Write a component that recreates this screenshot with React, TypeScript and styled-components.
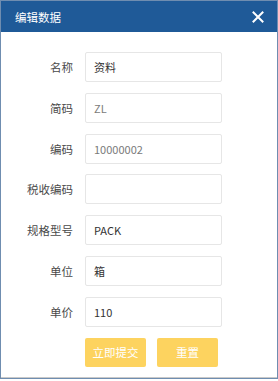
import React from 'react';
import styled, { createGlobalStyle } from 'styled-components';

const GlobalStyle = createGlobalStyle`
  html, body {
    margin: 0;
    padding: 0;
    background: #ffffff;
  }
  body {
    font-family: "Noto Sans CJK SC", "Noto Sans", sans-serif;
  }
`;

const Dialog = styled.div`
  width: 278px;
  height: 379px;
  box-sizing: border-box;
  border: 1px solid #6f8db0;
  box-shadow: inset 0 -1px 0 #c9c9c9;
  background: #ffffff;
  display: flex;
  flex-direction: column;
`;

const Header = styled.div`
  height: 31px;
  background: #1f5a98;
  display: flex;
  align-items: center;
  justify-content: space-between;
  padding: 0 13px 0 14px;
  color: #ffffff;
`;

const Title = styled.div`
  font-size: 11.5px;
`;

const CloseButton = styled.button`
  border: none;
  background: none;
  padding: 0;
  width: 12px;
  height: 12px;
  display: flex;
  cursor: pointer;
`;

const Body = styled.div`
  padding: 20px 0 0 0;
  display: grid;
  grid-template-columns: 72px 137px;
  column-gap: 12px;
  row-gap: 10.8px;
  align-items: center;
`;

const Label = styled.label`
  text-align: right;
  font-size: 11.5px;
  color: #4a4a4a;
  line-height: 30px;
`;

const Field = styled.div<{ muted?: boolean }>`
  height: 30px;
  box-sizing: border-box;
  border: 1px solid #e6e6e6;
  border-radius: 2px;
  padding: 0 8px;
  display: flex;
  align-items: center;
  font-size: 11px;
  color: ${p => (p.muted ? '#7a7a7a' : '#333')};
`;

const Actions = styled.div`
  grid-column: 2;
  display: flex;
  gap: 11px;
`;

const Button = styled.button`
  width: 61px;
  height: 29px;
  border: none;
  border-radius: 2px;
  background: #fdd35f;
  color: #ffffff;
  font-family: inherit;
  font-size: 11.5px;
  padding: 0;
`;

const rows: { label: string; value: string; muted?: boolean }[] = [
  { label: '名称', value: '资料' },
  { label: '简码', value: 'ZL', muted: true },
  { label: '编码', value: '10000002', muted: true },
  { label: '税收编码', value: '' },
  { label: '规格型号', value: 'PACK' },
  { label: '单位', value: '箱' },
  { label: '单价', value: '110' },
];

export default function App() {
  return (
    <>
      <GlobalStyle />
      <Dialog>
        <Header>
          <Title>编辑数据</Title>
          <CloseButton>
            <svg width="12" height="12" viewBox="0 0 12 12">
              <path d="M1.5 1.5 L10.5 10.5 M10.5 1.5 L1.5 10.5" stroke="#fff" strokeWidth="2" strokeLinecap="square" />
            </svg>
          </CloseButton>
        </Header>
        <Body>
          {rows.map(r => (
            <React.Fragment key={r.label}>
              <Label>{r.label}</Label>
              <Field muted={r.muted}>{r.value}</Field>
            </React.Fragment>
          ))}
          <Actions>
            <Button>立即提交</Button>
            <Button>重置</Button>
          </Actions>
        </Body>
      </Dialog>
    </>
  );
}
